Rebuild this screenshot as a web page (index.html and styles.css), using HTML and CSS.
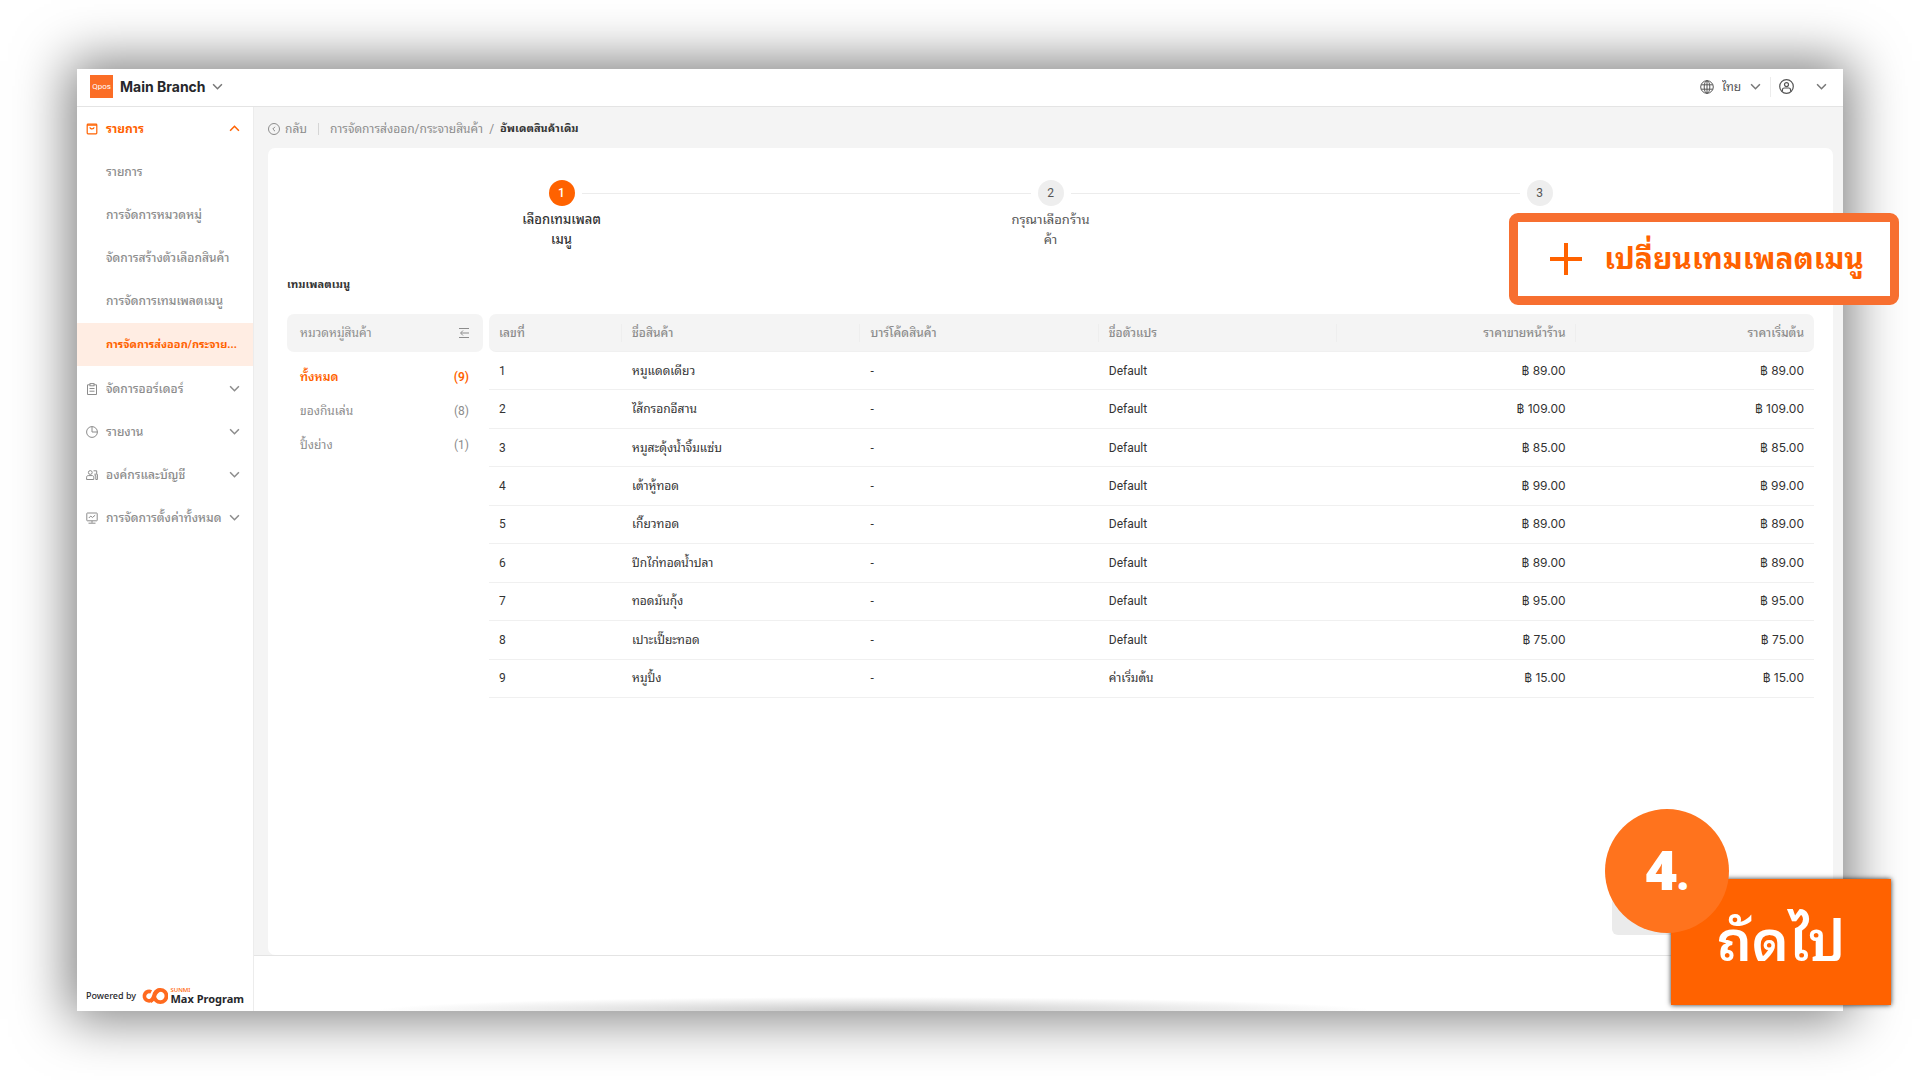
FILE: index.html
```html
<!DOCTYPE html>
<html lang="th">
<head>
    <meta charset="UTF-8">
    <meta name="viewport" content="width=device-width, initial-scale=1.0">
    <title>อัพเดตสินค้าเดิม - Main Branch</title>
    <link rel="stylesheet" href="styles.css">
</head>
<body>
    <!-- Shared chevron -->
    <svg class="sprite" aria-hidden="true">
        <symbol id="chevron" viewBox="0 0 10 10"><path d="M1 3l4 4 4-4" fill="none" stroke="currentColor" stroke-width="1.4"/></symbol>
    </svg>

    <div class="window">
        <header class="topbar">
            <div class="brand-logo">Qpos</div>
            <label class="picker branch">
                <select aria-label="Branch"><option>Main Branch</option></select>
                <svg class="chevron"><use href="#chevron"/></svg>
            </label>
            <div class="topbar-right">
                <label class="picker language">
                    <svg class="globe" viewBox="0 0 14 14" fill="none" stroke="currentColor"><circle cx="7" cy="7" r="6.3"/><ellipse cx="7" cy="7" rx="2.8" ry="6.3"/><path d="M7 .7v12.6M1.2 4.8h11.6M1.2 9.2h11.6"/></svg>
                    <select aria-label="Language"><option>ไทย</option></select>
                    <svg class="chevron"><use href="#chevron"/></svg>
                </label>
                <button class="account" aria-label="Account">
                    <svg class="user" viewBox="0 0 15 15" fill="none" stroke="currentColor" stroke-width="1.2"><circle cx="7.5" cy="7.5" r="6.8"/><circle cx="7.5" cy="5.6" r="2"/><path d="M3.4 12.6V11c0-1.2.8-2 2-2h4.200c1.200 0 2 .8 2 2v1.600"/></svg>
                    <svg class="chevron"><use href="#chevron"/></svg>
                </button>
            </div>
        </header>

        <div class="layout">
            <aside class="sidebar">
                <nav class="menu">
                    <button class="menu-item open">
                        <svg class="menu-icon" viewBox="0 0 12 12" fill="none" stroke="currentColor" stroke-width="1.200"><rect x="1.200" y="1.200" width="9.600" height="9.600" rx=".8"/><path d="M1.200 2.200h9.600M4 4.200c0 2.200 4 2.200 4 0"/></svg>
                        <span>รายการ</span>
                        <svg class="chevron up"><use href="#chevron"/></svg>
                    </button>
                    <div class="submenu">
                        <a href="#">รายการ</a>
                        <a href="#">การจัดการหมวดหมู่</a>
                        <a href="#">จัดการสร้างตัวเลือกสินค้า</a>
                        <a href="#">การจัดการเทมเพลตเมนู</a>
                        <a href="#" class="active">การจัดการส่งออก/กระจาย...</a>
                    </div>
                    <button class="menu-item">
                        <svg class="menu-icon" viewBox="0 0 12 12" fill="none" stroke="currentColor"><path d="M4 1.800H1.500v9.700h9V1.800H8"/><rect x="4" y=".6" width="4" height="2.200"/><path d="M3.500 5.500h5M3.500 8.200h5"/></svg>
                        <span>จัดการออร์เดอร์</span>
                        <svg class="chevron"><use href="#chevron"/></svg>
                    </button>
                    <button class="menu-item">
                        <svg class="menu-icon" viewBox="0 0 12 12" fill="none" stroke="currentColor"><circle cx="6" cy="6" r="5.400"/><path d="M6 .6V6h5.400"/></svg>
                        <span>รายงาน</span>
                        <svg class="chevron"><use href="#chevron"/></svg>
                    </button>
                    <button class="menu-item">
                        <svg class="menu-icon" viewBox="0 0 12 12" fill="none" stroke="currentColor"><circle cx="4.300" cy="3.500" r="1.900"/><path d="M.6 10.500V8.200c0-1 .7-1.600 1.600-1.600h4c.9 0 1.600.6 1.600 1.600v2.300zM7.500 1.800h3.200v3.400H8.300M8.600 6.600h1.200v3.900h1.600V5.200"/></svg>
                        <span>องค์กรและบัญชี</span>
                        <svg class="chevron"><use href="#chevron"/></svg>
                    </button>
                    <button class="menu-item">
                        <svg class="menu-icon" viewBox="0 0 12 12" fill="none" stroke="currentColor"><rect x=".8" y="1" width="10.400" height="7.800" rx=".5"/><path d="M2.800 6l2-2 1.600 1.500L9.200 3.200M6 8.800v2M2.500 11.200h7"/></svg>
                        <span>การจัดการตั้งค่าทั้งหมด</span>
                        <svg class="chevron"><use href="#chevron"/></svg>
                    </button>
                </nav>
                <div class="powered">
                    <span>Powered by</span>
                    <svg class="powered-logo" viewBox="0 0 28 18" fill="none" stroke="#ff6a1f" stroke-width="4"><path d="M11.500 12.200A5 5 0 1 1 9.800 4.600"/><circle cx="19.500" cy="9" r="6.500"/><path d="M9 14.500C13 13 13 3 19.500 2.500"/></svg>
                    <span class="powered-name"><small>SUNMI</small><b>Max Program</b></span>
                </div>
            </aside>

            <main class="content">
                <div class="breadcrumb">
                    <a href="#" class="back">
                        <svg viewBox="0 0 12 12" fill="none" stroke="currentColor"><circle cx="6" cy="6" r="5.500"/><path d="M7 3.800L4.800 6 7 8.200"/></svg>
                        กลับ
                    </a>
                    <a href="#">การจัดการส่งออก/กระจายสินค้า</a>
                    <span class="slash">/</span>
                    <b>อัพเดตสินค้าเดิม</b>
                </div>

                <section class="card">
                    <ol class="steps">
                        <li class="step current"><span class="step-number">1</span><span class="step-label">เลือกเทมเพลต<br>เมนู</span></li>
                        <li class="step"><span class="step-number">2</span><span class="step-label">กรุณาเลือกร้าน<br>ค้า</span></li>
                        <li class="step"><span class="step-number">3</span></li>
                    </ol>

                    <h1>เทมเพลตเมนู</h1>

                    <div class="template">
                        <div class="categories">
                            <div class="categories-head">
                                <span>หมวดหมู่สินค้า</span>
                                <button aria-label="Collapse">
                                    <svg viewBox="0 0 10 12" fill="none" stroke="currentColor"><path d="M0 1.500h10M2 6h8M0 10.500h10M4 3.500L1.500 6 4 8.500"/></svg>
                                </button>
                            </div>
                            <a href="#" class="category selected"><span>ทั้งหมด</span><span>(9)</span></a>
                            <a href="#" class="category"><span>ของกินเล่น</span><span>(8)</span></a>
                            <a href="#" class="category"><span>ปิ้งย่าง</span><span>(1)</span></a>
                        </div>

                        <div class="products-wrap">
                            <table class="products">
                                <thead>
                                    <tr><th class="col-no">เลขที่</th><th>ชื่อสินค้า</th><th>บาร์โค้ดสินค้า</th><th>ชื่อตัวแปร</th><th class="price">ราคาขายหน้าร้าน</th><th class="price">ราคาเริ่มต้น</th></tr>
                                </thead>
                                <tbody>
                                    <tr><td>1</td><td>หมูแดดเดียว</td><td>-</td><td>Default</td><td class="price">฿ 89.00</td><td class="price">฿ 89.00</td></tr>
                                    <tr><td>2</td><td>ไส้กรอกอีสาน</td><td>-</td><td>Default</td><td class="price">฿ 109.00</td><td class="price">฿ 109.00</td></tr>
                                    <tr><td>3</td><td>หมูสะดุ้งน้ำจิ้มแซ่บ</td><td>-</td><td>Default</td><td class="price">฿ 85.00</td><td class="price">฿ 85.00</td></tr>
                                    <tr><td>4</td><td>เต้าหู้ทอด</td><td>-</td><td>Default</td><td class="price">฿ 99.00</td><td class="price">฿ 99.00</td></tr>
                                    <tr><td>5</td><td>เกี๊ยวทอด</td><td>-</td><td>Default</td><td class="price">฿ 89.00</td><td class="price">฿ 89.00</td></tr>
                                    <tr><td>6</td><td>ปีกไก่ทอดน้ำปลา</td><td>-</td><td>Default</td><td class="price">฿ 89.00</td><td class="price">฿ 89.00</td></tr>
                                    <tr><td>7</td><td>ทอดมันกุ้ง</td><td>-</td><td>Default</td><td class="price">฿ 95.00</td><td class="price">฿ 95.00</td></tr>
                                    <tr><td>8</td><td>เปาะเปี๊ยะทอด</td><td>-</td><td>Default</td><td class="price">฿ 75.00</td><td class="price">฿ 75.00</td></tr>
                                    <tr><td>9</td><td>หมูปิ้ง</td><td>-</td><td>ค่าเริ่มต้น</td><td class="price">฿ 15.00</td><td class="price">฿ 15.00</td></tr>
                                </tbody>
                            </table>
                        </div>
                    </div>
                </section>

                <footer class="actions"></footer>
            </main>
        </div>

        <!-- Callouts laid over the window -->
        <button class="change-template">
            <svg viewBox="0 0 32 32" stroke="currentColor" stroke-width="4"><path d="M16 0v32M0 16h32"/></svg>
            เปลี่ยนเทมเพลตเมนู
        </button>
        <div class="ghost-btn"></div>
        <button class="next">ถัดไป</button>
        <div class="step-badge">4<small>.</small></div>
    </div>
</body>
</html>
```

FILE: styles.css
```css
:root {
    --orange: #ff6200;
    --orange-soft: #ffede3;
    --text: #333;
    --muted: #8c8c8c;
    --line: #ececec;
    --grey: #f4f4f4;
    --thai: "Noto Sans Thai Looped", Loma, "Noto Sans", sans-serif;
}

* {
    box-sizing: border-box;
}

body {
    margin: 0;
    padding: 69px 77px;
    min-height: 100vh;
    display: flex;
    overflow: hidden;
    background: #fff;
    color: var(--text);
    font-family: Roboto, var(--thai);
    font-size: 12px;
    line-height: 20px;
}

a {
    color: inherit;
    text-decoration: none;
}

button,
select {
    font: inherit;
    color: inherit;
    background: none;
    border: none;
    padding: 0;
    margin: 0;
    cursor: pointer;
}

select {
    appearance: none;
}

.sprite {
    position: absolute;
    width: 0;
    height: 0;
}

.chevron {
    width: 11px;
    height: 11px;
    flex: none;
}

.chevron.up {
    transform: rotate(180deg);
}

.window {
    position: relative;
    flex: 1;
    display: flex;
    flex-direction: column;
    background: #fff;
    box-shadow: 0 0 50px 8px rgba(0, 0, 0, 0.5);
}

/* Top bar */
.topbar {
    display: flex;
    align-items: center;
    height: 38px;
    padding: 0 16px 2px 13px;
    border-bottom: 1px solid #e4e4e4;
}

.brand-logo {
    width: 23px;
    height: 23px;
    margin-right: 7px;
    background: #fb6d26;
    color: #fff;
    font-size: 8px;
    line-height: 23px;
    text-align: center;
}

.picker {
    display: flex;
    align-items: center;
    gap: 6px;
    color: #777;
}

.branch select {
    color: #26272b;
    font-family: Inter, sans-serif;
    font-size: 14px;
    font-weight: 700;
}

.topbar-right {
    display: flex;
    align-items: center;
    margin-left: auto;
}

.language {
    gap: 8px;
    padding-right: 9px;
    border-right: 1px solid var(--line);
}

.language select,
.globe,
.user {
    color: #555;
}

.globe {
    width: 14px;
    height: 14px;
}

.account {
    display: flex;
    align-items: center;
    gap: 22px;
    padding-left: 8px;
    color: #777;
}

.user {
    width: 15px;
    height: 15px;
}

/* Sidebar */
.layout {
    flex: 1;
    display: flex;
}

.sidebar {
    width: 177px;
    flex: none;
    display: flex;
    flex-direction: column;
    border-right: 1px solid var(--line);
    color: var(--muted);
    font-weight: 500;
}

.menu {
    display: flex;
    flex-direction: column;
}

.menu-item {
    display: flex;
    align-items: center;
    height: 43px;
    padding: 0 13px 0 9px;
    text-align: left;
}

.menu-item span {
    flex: 1;
    white-space: nowrap;
}

.menu-icon {
    width: 12px;
    height: 12px;
    margin-right: 8px;
}

.menu-item.open {
    color: var(--orange);
    font-weight: 700;
}

.submenu {
    padding: 1px 0;
}

.submenu a {
    display: block;
    padding-left: 29px;
    line-height: 43px;
    height: 43px;
    white-space: nowrap;
}

.submenu .active {
    background: var(--orange-soft);
    color: var(--orange);
    font-size: 11px;
    font-weight: 700;
}

.powered {
    display: flex;
    align-items: center;
    gap: 6px;
    margin-top: auto;
    padding: 0 9px 5px;
    color: #26272b;
    font-family: "Noto Sans", sans-serif;
    font-size: 9px;
    white-space: nowrap;
}

.powered-logo {
    width: 28px;
    height: 18px;
}

.powered-name {
    display: flex;
    flex-direction: column;
    margin-left: -4px;
}

.powered-name small {
    color: var(--orange);
    font-size: 6px;
    line-height: 6px;
}

.powered-name b {
    font-size: 11px;
    line-height: 12px;
}

/* Content */
.content {
    flex: 1;
    display: flex;
    flex-direction: column;
    background: var(--grey);
}

.breadcrumb {
    display: flex;
    align-items: center;
    height: 41px;
    padding: 2px 14px 0;
    color: var(--muted);
}

.breadcrumb b {
    color: var(--text);
    font-size: 11px;
    font-weight: 700;
}

.back {
    display: flex;
    align-items: center;
    gap: 5px;
    line-height: 12px;
    padding-right: 11px;
    margin-right: 11px;
    border-right: 1px solid #d5d5d5;
}

.back svg {
    width: 12px;
    height: 12px;
}

.slash {
    margin: 0 6px;
}

.card {
    flex: 1;
    margin: 0 10px 0 14px;
    padding: 32px 19px;
    background: #fff;
    border-radius: 7px;
}

.steps {
    display: flex;
    list-style: none;
    margin: 0 30px;
    padding: 0;
    min-height: 82px;
}

.step {
    position: relative;
    flex: 1;
    display: flex;
    flex-direction: column;
    align-items: center;
    gap: 4px;
    color: #555;
    font-size: 13px;
    text-align: center;
}

.step-number {
    width: 26px;
    height: 26px;
    border-radius: 50%;
    background: #eee;
    font-size: 12px;
    line-height: 26px;
}

/* Connector to the next step */
.step:not(:last-child)::after {
    content: "";
    position: absolute;
    top: 13px;
    left: calc(50% + 20px);
    width: calc(100% - 40px);
    height: 1px;
    background: var(--line);
}

.current {
    color: var(--text);
    font-weight: 500;
}

.current .step-number {
    background: var(--orange);
    color: #fff;
}

h1 {
    margin: 13px 0 19px;
    font-size: 11px;
    line-height: 20px;
    font-weight: 700;
}

.template {
    display: flex;
    align-items: flex-start;
    gap: 6px;
}

.categories {
    width: 196px;
    flex: none;
    color: var(--muted);
}

.categories-head,
.category {
    display: flex;
    align-items: center;
    justify-content: space-between;
    padding: 0 14px 0 13px;
}

.categories-head {
    height: 38px;
    margin-bottom: 8px;
    background: var(--grey);
    border-radius: 7px;
}

.categories-head svg {
    display: block;
    width: 10px;
    height: 12px;
}

.category {
    height: 34px;
}

.category.selected {
    color: var(--orange);
    font-weight: 600;
}

.products-wrap {
    flex: 1;
}

.products {
    width: 100%;
    height: 384px;
    table-layout: fixed;
    border-collapse: separate;
    border-spacing: 0;
}

.products th,
.products td {
    height: 38px;
    padding: 0 10px;
    text-align: left;
    border-bottom: 1px solid #f0f0f0;
}

.products th {
    position: relative;
    background: var(--grey);
    color: var(--muted);
    font-weight: 500;
}

.products th:not(:last-child)::after {
    content: "";
    position: absolute;
    top: 10px;
    right: 0;
    width: 1px;
    height: 18px;
    background: #eee;
}

.products th:first-child {
    border-radius: 7px 0 0 7px;
}

.products th:last-child {
    border-radius: 0 7px 7px 0;
}

.products .col-no {
    width: 133px;
}

.products .price {
    font-family: Inter, var(--thai);
    text-align: right;
}

.actions {
    height: 56px;
    background: radial-gradient(ellipse 500px 14px at 39% 100%, #c8c8c8, #fff);
    border-top: 1px solid #e4e4e4;
}

/* Callouts */
.change-template {
    position: absolute;
    top: 144px;
    right: -56px;
    display: flex;
    align-items: center;
    gap: 22px;
    height: 92px;
    padding: 0 26px 0 32px;
    background: #fff;
    border: 9px solid #f76f30;
    border-radius: 9px;
    color: var(--orange);
    font-size: 30px;
    font-weight: 700;
    line-height: 40px;
    white-space: nowrap;
}

.change-template svg {
    width: 32px;
    height: 32px;
}

.ghost-btn {
    position: absolute;
    right: 131px;
    bottom: 76px;
    width: 100px;
    height: 38px;
    background: #ebebeb;
    border-radius: 6px;
}

.next {
    position: absolute;
    right: -48px;
    bottom: 6px;
    width: 220px;
    height: 126px;
    background: var(--orange);
    box-shadow: 0 0 5px rgba(0, 0, 0, 0.8);
    color: #fff;
    font-size: 56px;
    font-weight: 600;
    line-height: 60px;
}

.step-badge {
    position: absolute;
    right: 114px;
    bottom: 78px;
    width: 124px;
    height: 124px;
    border-radius: 50%;
    background: #ff731d;
    color: #fff;
    font-family: "Open Sans", sans-serif;
    font-size: 54px;
    font-weight: 800;
    line-height: 120px;
    text-align: center;
}

.step-badge small {
    font-size: 40px;
}
```
